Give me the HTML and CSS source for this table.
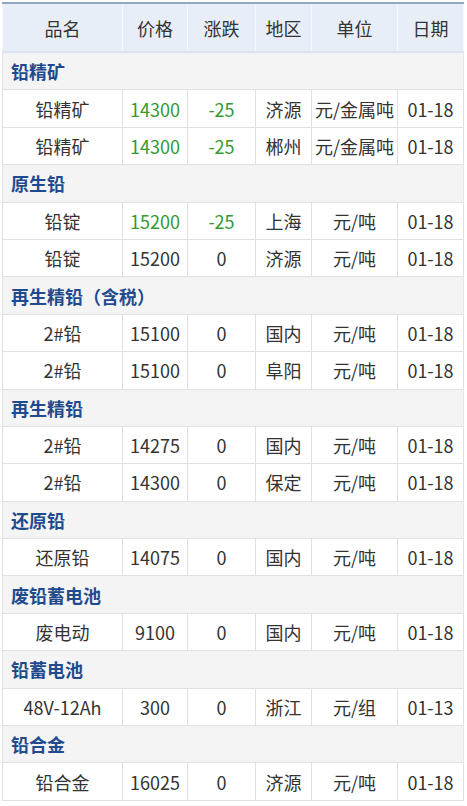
FILE: index.html
```html
<!DOCTYPE html>
<html lang="zh">
<head>
<meta charset="utf-8">
<title>铅价格</title>
<link rel="stylesheet" href="styles.css">
</head>
<body>
<div class="wrap">
<table class="price">
  <colgroup>
    <col class="c-name"><col class="c-price"><col class="c-chg"><col class="c-area"><col class="c-unit"><col class="c-date">
  </colgroup>
  <thead>
    <tr><th>品名</th><th>价格</th><th>涨跌</th><th>地区</th><th>单位</th><th>日期</th></tr>
  </thead>
  <tbody>
    <tr class="sec"><td colspan="6">铅精矿</td></tr>
    <tr><td>铅精矿</td><td class="up">14300</td><td class="up">-25</td><td>济源</td><td>元/金属吨</td><td>01-18</td></tr>
    <tr><td>铅精矿</td><td class="up">14300</td><td class="up">-25</td><td>郴州</td><td>元/金属吨</td><td>01-18</td></tr>
    <tr class="sec"><td colspan="6">原生铅</td></tr>
    <tr><td>铅锭</td><td class="up">15200</td><td class="up">-25</td><td>上海</td><td>元/吨</td><td>01-18</td></tr>
    <tr><td>铅锭</td><td>15200</td><td>0</td><td>济源</td><td>元/吨</td><td>01-18</td></tr>
    <tr class="sec"><td colspan="6">再生精铅（含税）</td></tr>
    <tr><td>2#铅</td><td>15100</td><td>0</td><td>国内</td><td>元/吨</td><td>01-18</td></tr>
    <tr><td>2#铅</td><td>15100</td><td>0</td><td>阜阳</td><td>元/吨</td><td>01-18</td></tr>
    <tr class="sec"><td colspan="6">再生精铅</td></tr>
    <tr><td>2#铅</td><td>14275</td><td>0</td><td>国内</td><td>元/吨</td><td>01-18</td></tr>
    <tr><td>2#铅</td><td>14300</td><td>0</td><td>保定</td><td>元/吨</td><td>01-18</td></tr>
    <tr class="sec"><td colspan="6">还原铅</td></tr>
    <tr><td>还原铅</td><td>14075</td><td>0</td><td>国内</td><td>元/吨</td><td>01-18</td></tr>
    <tr class="sec"><td colspan="6">废铅蓄电池</td></tr>
    <tr><td>废电动</td><td>9100</td><td>0</td><td>国内</td><td>元/吨</td><td>01-18</td></tr>
    <tr class="sec"><td colspan="6">铅蓄电池</td></tr>
    <tr><td>48V-12Ah</td><td>300</td><td>0</td><td>浙江</td><td>元/组</td><td>01-13</td></tr>
    <tr class="sec"><td colspan="6">铅合金</td></tr>
    <tr><td>铅合金</td><td>16025</td><td>0</td><td>济源</td><td>元/吨</td><td>01-18</td></tr>
  </tbody>
</table>
</div>
</body>
</html>
```

FILE: styles.css
```css
html, body {
  margin: 0;
  padding: 0;
  background: #ffffff;
}
.wrap {
  padding: 2px 0 0 2px;
}
.price {
  border-collapse: collapse;
  table-layout: fixed;
  width: 461px;
  font-family: "Microsoft YaHei", "Noto Sans CJK SC", "Noto Sans", sans-serif;
  font-size: 18px;
  color: #333333;
  border-top: 2px solid #93a8c6;
}
.c-name { width: 120px; }
.c-price { width: 65px; }
.c-chg { width: 68px; }
.c-area { width: 56px; }
.c-unit { width: 86px; }
.c-date { width: 66px; }

.price th {
  height: 47px;
  background: #e8eef8;
  font-weight: normal;
  color: #333333;
  border-left: 1px solid #f6f8fc;
  border-right: 1px solid #f6f8fc;
  border-bottom: 2px solid #dde3ec;
  padding: 0;
  text-align: center;
  line-height: 1;
}
.price td {
  height: 36.4px;
  padding: 0;
  text-align: center;
  border: 1px solid #e0e0e0;
  white-space: nowrap;
  line-height: 1;
}
.price tr.sec td {
  background: #f4f4f4;
  text-align: left;
  padding-left: 8px;
  font-weight: bold;
  color: #1f4b8e;
  border-left: 1px solid #e6e6e6;
  border-right: 1px solid #e6e6e6;
}
.price td.up {
  color: #339933;
}
```
